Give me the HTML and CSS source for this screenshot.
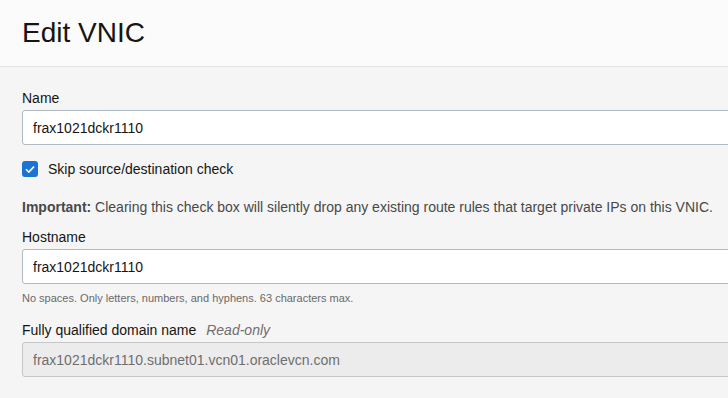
FILE: index.html
```html
<!DOCTYPE html>
<html lang="en">
<head>
  <meta charset="UTF-8"/>
  <title>Edit VNIC</title>
  <link rel="stylesheet" href="styles.css">
</head>
<body>

  <!-- HEADER -->
  <header class="panel-head">
    <h1>Edit VNIC</h1>
  </header>

  <!-- FORM -->
  <form class="panel-body">
    <div class="field">
      <label for="name">Name</label>
      <input type="text" id="name" value="frax1021dckr1110"/>
    </div>

    <label class="check">
      <span class="box">
        <svg width="16" height="16" viewBox="0 0 16 16"><path d="M4 8.2l2.8 2.8L12 5.6" fill="none" stroke="#fff" stroke-width="1.6"/></svg>
      </span>
      Skip source/destination check
    </label>

    <p class="note"><b>Important:</b> Clearing this check box will silently drop any existing route rules that target private IPs on this VNIC.</p>

    <div class="field">
      <label for="hostname">Hostname</label>
      <input type="text" id="hostname" value="frax1021dckr1110"/>
      <small class="hint">No spaces. Only letters, numbers, and hyphens. 63 characters max.</small>
    </div>

    <div class="field">
      <label for="fqdn">Fully qualified domain name <i>Read-only</i></label>
      <input type="text" id="fqdn" class="readonly" value="frax1021dckr1110.subnet01.vcn01.oraclevcn.com" readonly/>
    </div>
  </form>

</body>
</html>
```

FILE: styles.css
```css
html, body { margin:0; padding:0; overflow:hidden; }
body { font-family:"Liberation Sans", Arial, sans-serif; background:#f5f5f5; color:#161513; width:728px; height:398px; }

.panel-head { height:67px; background:#fbfbfb; border-bottom:1px solid #e3e3e3; padding:0 22px; box-sizing:border-box; }
.panel-head h1 { margin:0; padding-top:16px; font-size:28px; font-weight:normal; line-height:34px; color:#161513; }

.panel-body { padding:23px 0 0 22px; }

.field { display:flex; flex-direction:column; }
.field label { font-size:14px; line-height:16px; margin-bottom:4px; }
.field label i { color:#6f6f6f; margin-left:6px; }
.field input {
  width:760px; height:35px; box-sizing:border-box;
  border:1px solid #b3b9c1; border-radius:3px; background:#fff;
  padding:0 10px; font:14px "Liberation Sans", Arial, sans-serif; color:#161513;
  outline:none;
}
.field input.readonly { background:#ececec; color:#6f6f6f; border-color:#c4c6c8; }

.check { display:flex; align-items:center; gap:10px; margin-top:16px; font-size:14px; line-height:16px; }
.check .box { width:16px; height:16px; border-radius:3px; background:#1b74d3; display:flex; }

.note { margin:22px 0 14px; font-size:14px; line-height:16px; color:#484848; white-space:nowrap; }
.note b { color:#484848; }

.hint { font-size:11px; line-height:14px; color:#6a6a6a; margin:7px 0 17px; }
```
